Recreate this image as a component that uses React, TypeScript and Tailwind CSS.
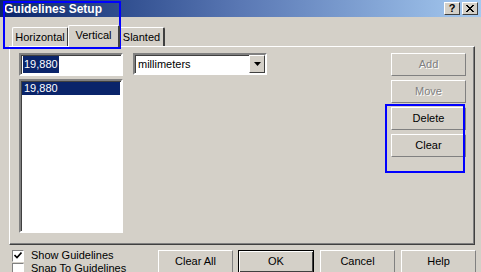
import React from "react";

const FONT = { fontFamily: '"Liberation Sans", Arial, sans-serif' };

function Btn({ label, w = "w-[75px]", disabled, isDefault, className = "" }: { label: string; w?: string; disabled?: boolean; isDefault?: boolean; className?: string }) {
  return (
    <div
      className={`${w} h-[23px] flex items-center justify-center text-[11px] bg-[#d4d0c8] ${
        isDefault
          ? "border border-black shadow-[inset_1px_1px_0_#fff,inset_-1px_-1px_0_#404040]"
          : "border border-t-white border-l-white border-r-[#808080] border-b-[#808080]"
      } ${disabled ? "text-[#808080] [text-shadow:1px_1px_0_#fff]" : "text-black"} ${className}`}
    >
      {label}
    </div>
  );
}

function Tab({ label, selected, className = "" }: { label: string; selected?: boolean; className?: string }) {
  return (
    <div
      className={`flex items-center justify-center text-[11px] bg-[#d4d0c8] border-l border-t border-l-white border-t-white border-r-2 border-r-[#404040] rounded-t-[2px] ${
        selected ? "h-[22px] pb-[3px] relative z-10 -mb-[1px]" : "h-[19px]"
      } ${className}`}
    >
      {label}
    </div>
  );
}

export default function App() {
  return (
    <div className="relative w-[481px] h-[272px] overflow-hidden bg-[#d4d0c8] text-black" style={FONT}>
      {/* title bar */}
      <div className="h-[17px] flex items-center justify-between pl-[4px] pr-[3px] bg-gradient-to-r from-[#0a246a] via-[#5a78b4] to-[#a6caf0]">
        <span className="text-white font-bold text-[12px] leading-none">Guidelines Setup</span>
        <div className="flex gap-[2px]">
          <div className="w-[16px] h-[13px] bg-[#d4d0c8] border border-t-white border-l-white border-r-[#404040] border-b-[#404040] flex items-center justify-center text-[11px] font-bold leading-none">?</div>
          <div className="w-[16px] h-[13px] bg-[#d4d0c8] border border-t-white border-l-white border-r-[#404040] border-b-[#404040] flex items-center justify-center">
            <svg width="8" height="7" viewBox="0 0 8 7">
              <path d="M0 0 L7 7 M1 0 L8 7 M7 0 L0 7 M8 0 L1 7" stroke="black" strokeWidth="1" />
            </svg>
          </div>
        </div>
      </div>

      {/* tabs */}
      <div className="flex items-end pl-[12px] pt-[8px]">
        <Tab label="Horizontal" className="w-[57px]" />
        <Tab label="Vertical" selected className="w-[52px] -mx-[1px]" />
        <Tab label="Slanted" className="w-[46px]" />
      </div>

      {/* panel */}
      <div className="ml-[9px] w-[466px] h-[199px] border-l border-t border-white border-r border-b border-r-[#404040] border-b-[#404040] shadow-[inset_-1px_-1px_0_#808080] flex pt-[6px] pl-[9px] pr-[8px]">
        <div className="w-[104px] flex flex-col">
          <div className="h-[23px] bg-white border-2 border-t-[#808080] border-l-[#808080] border-b-white border-r-white shadow-[inset_1px_1px_0_#404040] flex items-center pl-[2px] text-[11px]">
            <span className="bg-[#0a246a] text-white px-[1px]">19,880</span>
          </div>
          <div className="mt-[3px] h-[154px] bg-white border-2 border-t-[#808080] border-l-[#808080] border-b-white border-r-white shadow-[inset_1px_1px_0_#404040] pt-[1px] px-[1px] text-[11px]">
            <div className="h-[13px] bg-[#0a246a] text-white pl-[2px] leading-[13px]">19,880</div>
          </div>
        </div>

        <div className="ml-[10px] w-[134px] h-[22px] bg-white border-2 border-t-[#808080] border-l-[#808080] border-b-white border-r-white shadow-[inset_1px_1px_0_#404040] flex items-center text-[11px]">
          <span className="pl-[3px] flex-1">millimeters</span>
          <div className="w-[16px] h-[18px] bg-[#d4d0c8] border border-t-white border-l-white border-r-[#404040] border-b-[#404040] flex items-center justify-center">
            <svg width="7" height="4" viewBox="0 0 7 4">
              <path d="M0 0 H7 L3.5 4 Z" fill="black" />
            </svg>
          </div>
        </div>

        <div className="ml-auto flex flex-col gap-[4px]">
          <Btn label="Add" disabled />
          <Btn label="Move" disabled />
          <Btn label="Delete" />
          <Btn label="Clear" />
        </div>
      </div>

      {/* bottom row */}
      <div className="flex pl-[12px] pt-[4px] text-[11px]">
        <div className="w-[146px] flex flex-col">
          <div className="h-[13px] flex items-center gap-[7px] leading-[13px]">
            <div className="w-[12px] h-[12px] bg-white border border-t-[#808080] border-l-[#808080] border-b-white border-r-white flex items-center justify-center">
              <svg width="8" height="7" viewBox="0 0 8 7">
                <path d="M0.5 3 L3 5.5 L7.5 0.5" stroke="black" strokeWidth="1.6" fill="none" />
              </svg>
            </div>
            <span>Show Guidelines</span>
          </div>
          <div className="h-[13px] flex items-center gap-[7px] leading-[13px]">
            <div className="w-[12px] h-[12px] bg-white border border-t-[#808080] border-l-[#808080] border-b-white border-r-white" />
            <span>Snap To Guidelines</span>
          </div>
        </div>
        <div className="flex pt-[1px]">
          <Btn label="Clear All" />
          <Btn label="OK" isDefault className="ml-[5px] w-[76px]" w="" />
          <Btn label="Cancel" className="ml-[6px]" />
          <Btn label="Help" className="ml-[6px]" />
        </div>
      </div>

      {/* annotation overlays */}
      <div className="absolute left-[3px] top-[1px] w-[118px] h-[48px] border-2 border-[#0000ff]" />
      <div className="absolute left-[385px] top-[104px] w-[80px] h-[69px] border-2 border-[#0000ff]" />
    </div>
  );
}
